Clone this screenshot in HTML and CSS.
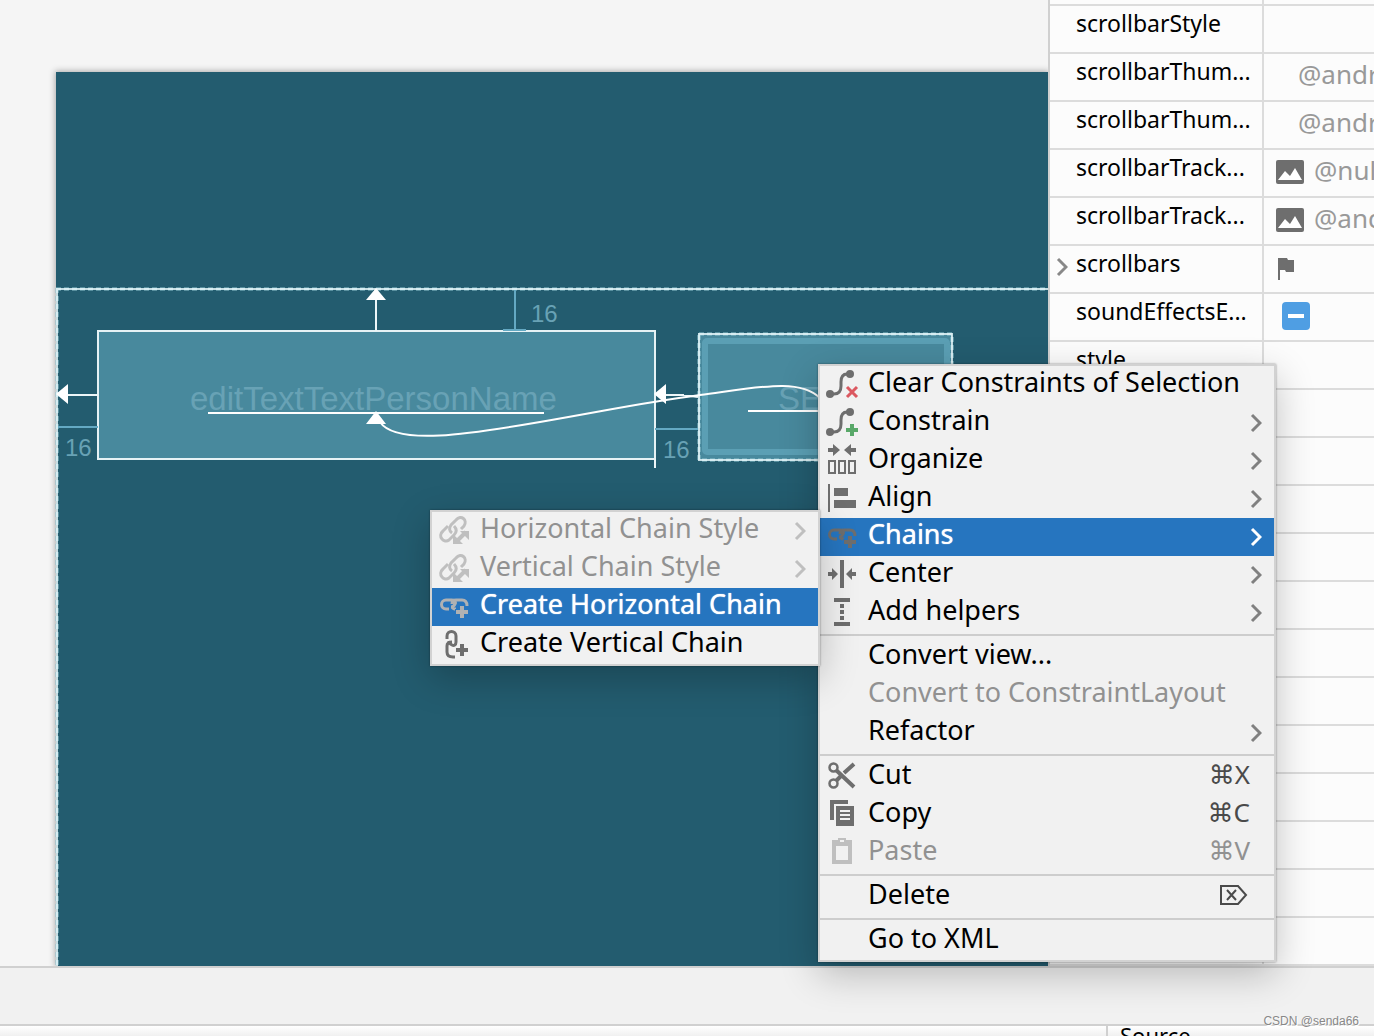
FILE: index.html
```html
<!DOCTYPE html>
<html lang="en">
<head>
<meta charset="utf-8">
<title>Layout Editor</title>
<link rel="stylesheet" href="styles.css">
</head>
<body>
<svg class="defs" aria-hidden="true">
  <defs>
    <symbol id="chevron" viewBox="0 0 12 20"><path d="M2 2l8 8-8 8" fill="none" stroke="currentColor" stroke-width="3"/></symbol>
    <symbol id="constraint" viewBox="0 0 28 28"><path d="M2 24h4c5 0 7-3 7-8v-4c0-5 2-8 6-8h3" fill="none" stroke="currentColor" stroke-width="3"/><circle cx="2" cy="24" r="4" fill="currentColor"/><circle cx="22" cy="4" r="4" fill="currentColor"/></symbol>
    <symbol id="chain" viewBox="0 0 28 28"><path d="M9 17H6a4.500 4.500 0 0 1 0-9h6c3 0 4 2 3 4s-2 3-4 3M12 12c0-3 2-4 4-4h6c3 0 5 2 5 6M12 15c1 2 2 2 4 2" fill="none" stroke="currentColor" stroke-width="3"/></symbol>
    <symbol id="chain-style" viewBox="0 0 28 28"><g fill="none" stroke="currentColor" stroke-width="3"><path d="M12 17c-3-2-3-5-1-8l5-5c5-6 12 0 8 6l-3 3"/><path d="M8 10l-5 5c-6 5 1 13 6 9l5-5c3-3 3-6 0-9"/><path d="M17 25l9-9" stroke-width="4"/></g><path d="M20 15h9v9zM13 18v10h10z" fill="currentColor"/></symbol>
    <symbol id="image" viewBox="0 0 28 24"><rect width="28" height="24" rx="2" fill="currentColor"/><path d="M2 20l7-9 5 5 5-8 7 12z" fill="#fff"/></symbol>
  </defs>
</svg>

<main class="workspace">
  <section class="canvas" aria-label="Blueprint">
    <div class="blueprint"></div>
    <svg class="drawing" width="1048" height="966">
      <g class="dashed">
        <path d="M56 289H1048M57 288V966"/>
      </g>
      <path class="core" d="M56 289H1048M57 288V966"/>
      <rect class="widget" x="98" y="331" width="557" height="128"/>
      <path class="edge" d="M655 459v9"/>
      <rect class="widget-fill" x="698" y="333" width="254" height="127"/>
      <rect class="dash-box" x="699" y="334" width="253" height="126"/>
      <rect class="core" x="699" y="334" width="253" height="126"/>
      <rect class="halo" x="705" y="341" width="242" height="111" rx="2"/>
      <text class="label" x="190" y="410">editTextTextPersonName</text>
      <text class="label" x="778" y="410">SE</text>
      <path class="baseline" d="M208 413H544M748 411H830"/>
      <path class="margin" d="M515 290v40M503 330h23M58 427h40M655 429h43"/>
      <text class="distance" x="531" y="322">16</text>
      <text class="distance" x="65" y="456">16</text>
      <text class="distance" x="663" y="458">16</text>
      <path class="edge" d="M376 299v32M66 395h32M665 395h19M683 395l15 2"/>
      <path class="wire" d="M380 422C396 446 470 434 540 422S640 403 700 395S800 378 820 398"/>
      <path class="arrow" d="M376 288l10 12h-20zM376 411l10 13h-20zM56 394l12-10v20zM654 394l12-10v20z"/>
    </svg>
  </section>

  <aside class="properties" aria-label="Attributes">
    <table>
      <tbody>
        <tr class="cut-off"><th></th><td></td></tr>
        <tr><th scope="row">scrollbarStyle</th><td></td></tr>
        <tr><th scope="row">scrollbarThum...</th><td><span class="value swatch">@android</span></td></tr>
        <tr><th scope="row">scrollbarThum...</th><td><span class="value swatch">@android</span></td></tr>
        <tr><th scope="row">scrollbarTrack...</th><td><span class="value"><svg width="28" height="24"><use href="#image"/></svg>@null</span></td></tr>
        <tr><th scope="row">scrollbarTrack...</th><td><span class="value"><svg width="28" height="24"><use href="#image"/></svg>@android</span></td></tr>
        <tr><th scope="row"><svg class="expand" width="12" height="20"><use href="#chevron"/></svg>scrollbars</th><td><span class="value"><svg width="20" height="24" viewBox="0 0 20 24"><path d="M2 2h9l1 2h6v12h-8l-1-2H4v10H2z" fill="currentColor"/></svg></span></td></tr>
        <tr><th scope="row"><label for="sound">soundEffectsE...</label></th><td><span class="value"><input id="sound" type="checkbox"></span></td></tr>
        <tr><th scope="row">style</th><td></td></tr>
        <tr><th></th><td></td></tr><tr><th></th><td></td></tr><tr><th></th><td></td></tr>
        <tr><th></th><td></td></tr><tr><th></th><td></td></tr><tr><th></th><td></td></tr>
        <tr><th></th><td></td></tr><tr><th></th><td></td></tr><tr><th></th><td></td></tr>
        <tr><th></th><td></td></tr><tr><th></th><td></td></tr><tr><th></th><td></td></tr>
      </tbody>
    </table>
  </aside>
</main>

<footer class="status"></footer>
<section class="editor"><div class="editor-left"></div><div class="source">Source</div></section>
<div class="watermark">CSDN @senda66</div>

<nav class="menu context" aria-label="Context menu">
  <button><svg class="icon" viewBox="0 0 28 28"><use href="#constraint"/><path d="M19 17l10 10M29 17l-10 10" stroke="#db5860" stroke-width="3"/></svg><span class="text">Clear Constraints of Selection</span></button>
  <button><svg class="icon" viewBox="0 0 28 28"><use href="#constraint"/><path d="M24 16v12M18 22h12" stroke="#59a869" stroke-width="4"/></svg><span class="text">Constrain</span><svg class="more"><use href="#chevron"/></svg></button>
  <button><svg class="icon" viewBox="0 0 28 28"><path d="M0 2h5v-4l7 6-7 6V6H0zM28 2h-5v-4l-7 6 7 6V6h5z" fill="currentColor"/><path d="M1 15h6v12H1zM11 15h6v12h-6zM21 15h6v12h-6z" fill="none" stroke="currentColor" stroke-width="2"/></svg><span class="text">Organize</span><svg class="more"><use href="#chevron"/></svg></button>
  <button><svg class="icon" viewBox="0 0 28 28"><path d="M0 0h2v28H0zM6 4h14v8H6zM6 16h22v8H6z" fill="currentColor"/></svg><span class="text">Align</span><svg class="more"><use href="#chevron"/></svg></button>
  <button class="selected"><svg class="icon" viewBox="0 0 28 28"><use href="#chain"/><path class="plus" d="M22 13v14M15 20h14"/><path d="M22 14v12M16 20h12" stroke="currentColor" stroke-width="4"/></svg><span class="text">Chains</span><svg class="more"><use href="#chevron"/></svg></button>
  <button><svg class="icon" viewBox="0 0 28 28"><path d="M12 0h4v28h-4zM0 12h4V8l6 6-6 6v-4H0zM28 12h-4V8l-6 6 6 6v-4h4z" fill="currentColor"/></svg><span class="text">Center</span><svg class="more"><use href="#chevron"/></svg></button>
  <button><svg class="icon" viewBox="0 0 28 28"><path d="M6 0h16v4H6zM6 24h16v4H6zM12 6h4v4h-4zM12 12h4v4h-4zM12 18h4v4h-4z" fill="currentColor"/></svg><span class="text">Add helpers</span><svg class="more"><use href="#chevron"/></svg></button>
  <hr>
  <button><span class="icon"></span><span class="text">Convert view...</span></button>
  <button disabled><span class="icon"></span><span class="text">Convert to ConstraintLayout</span></button>
  <button><span class="icon"></span><span class="text">Refactor</span><svg class="more"><use href="#chevron"/></svg></button>
  <hr>
  <button><svg class="icon" viewBox="0 0 28 28"><g fill="none" stroke="currentColor"><circle cx="5.500" cy="5.500" r="4" stroke-width="2.500"/><circle cx="5.500" cy="21.500" r="4" stroke-width="2.500"/><path d="M8 8l18 17M8 19l6-6M16 11L26 2" stroke-width="4"/></g></svg><span class="text">Cut</span><kbd class="text">⌘X</kbd></button>
  <button><svg class="icon" viewBox="0 0 28 28"><path d="M2 0h18v4H6v16H2zM8 6h18v20H8z" fill="currentColor"/><path d="M12 11h10M12 15h10M12 19h10" stroke="#f1f1f1" stroke-width="2"/></svg><span class="text">Copy</span><kbd class="text">⌘C</kbd></button>
  <button disabled><svg class="icon" viewBox="0 0 28 28"><path d="M4 2h6V0h8v2h6v24H4zM8 8v14h12V8zM12 2v2h4V2z" fill="currentColor" fill-rule="evenodd"/></svg><span class="text">Paste</span><kbd class="text">⌘V</kbd></button>
  <hr>
  <button><span class="icon"></span><span class="text">Delete</span><kbd class="glyph"><svg width="28" height="20" viewBox="0 0 28 20" role="img" aria-label="Forward delete"><path d="M1 1h17l8 9-8 9H1zM7 5l9 10M16 5L7 15" fill="none" stroke="currentColor" stroke-width="2"/></svg></kbd></button>
  <hr>
  <button><span class="icon"></span><span class="text">Go to XML</span></button>
</nav>

<nav class="menu submenu" aria-label="Chains">
  <button disabled><svg class="icon" viewBox="0 0 28 28"><use href="#chain-style"/></svg><span class="text">Horizontal Chain Style</span><svg class="more"><use href="#chevron"/></svg></button>
  <button disabled><svg class="icon" viewBox="0 0 28 28"><use href="#chain-style"/></svg><span class="text">Vertical Chain Style</span><svg class="more"><use href="#chevron"/></svg></button>
  <button class="selected light"><svg class="icon" viewBox="0 0 28 28"><use href="#chain"/><path class="plus" d="M22 13v14M15 20h14"/><path d="M22 14v12M16 20h12" stroke="currentColor" stroke-width="4"/></svg><span class="text">Create Horizontal Chain</span></button>
  <button><svg class="icon" viewBox="0 0 28 28"><g fill="none" stroke="currentColor" stroke-width="3"><path d="M7 9V6c0-6 9-6 9 0v6c0 3-2 4-4 3s-3-2-3-4"/><path d="M12 12c-3 0-5 1-5 4v6c0 3 2 5 6 5h2"/></g><path d="M22 14v12M16 20h12" stroke="currentColor" stroke-width="4"/></svg><span class="text">Create Vertical Chain</span></button>
</nav>
</body>
</html>
```

FILE: styles.css
```css
* { box-sizing: border-box; }

body {
  margin: 0;
  height: 100vh;
  position: relative;
  display: flex;
  flex-direction: column;
  overflow: hidden;
  background: #f1f1f1;
  color: #000;
  font-family: "Noto Sans", "DejaVu Sans", sans-serif;
}

.defs { position: absolute; width: 0; height: 0; }
symbol { overflow: visible; }

/* Workspace */
.workspace { flex: 1; min-height: 0; display: flex; }

.canvas {
  flex: 1;
  min-width: 0;
  position: relative;
  display: flex;
  overflow: hidden;
  padding: 72px 0 0 56px;
  background: #f5f5f5;
}
.blueprint { flex: 1; background: #235c6f; box-shadow: 0 0 6px 1px #aaa; }
.drawing { position: absolute; left: 0; top: 0; fill: none; }

.dashed path, .dash-box { stroke: #8fc3d0; stroke-width: 3; stroke-dasharray: 5 3; }
.core { stroke: #e4f5f8; stroke-width: 2; stroke-opacity: .85; }
.widget { fill: #48899d; stroke: #e6f2f5; stroke-width: 2; }
.widget-fill { fill: #48899d; }
.halo { stroke: #5b9fb4; stroke-width: 6; }
.edge { stroke: #edf6f8; stroke-width: 2; }
.wire { stroke: #fff; stroke-width: 2; }
.baseline { stroke: #fff; stroke-width: 2; }
.margin { stroke: #64a9c3; stroke-width: 2; }
.arrow { fill: #fff; }
.label { fill: #68a2b5; font: 33px "Liberation Sans", sans-serif; }
.distance { fill: #68a2b5; font: 24px "Liberation Sans", sans-serif; }

/* Attribute table */
.properties {
  width: 326px;
  flex: none;
  overflow: hidden;
  border-left: 2px solid #d0d0d0;
  background: #fcfcfc;
}
table { width: 100%; table-layout: fixed; border-collapse: separate; border-spacing: 0; }
tr { height: 48px; }
tr.cut-off { height: 6px; }
th, td { padding: 0; border-bottom: 2px solid #dcdcdc; white-space: nowrap; overflow: hidden; }
th {
  width: 214px;
  position: relative;
  padding: 0 0 12px 26px;
  border-right: 2px solid #dcdcdc;
  text-align: left;
  font-size: 23px;
  line-height: 30px;
  font-weight: 400;
}
td { padding: 0 0 6px 12px; }
.cut-off th, .cut-off td { padding: 0; }
.expand { position: absolute; left: 6px; top: 11px; color: #888; }
.value { display: flex; align-items: center; gap: 10px; color: #999; font-size: 26px; line-height: 36px; }
.value svg { flex: none; margin-top: 4px; color: #6e6e6e; }
.swatch { padding-left: 22px; }
input[type="checkbox"] {
  appearance: none;
  width: 28px;
  height: 28px;
  margin: 4px 6px 0;
  border-radius: 4px;
  background: linear-gradient(#fff, #fff) center / 16px 4px no-repeat #4f9ee3;
}

/* Bottom panes */
.status { height: 58px; flex: none; border-top: 2px solid #d0d0d0; }
.editor {
  height: 12px;
  flex: none;
  display: flex;
  overflow: hidden;
  border-top: 2px solid #d0d0d0;
  background: linear-gradient(#fff, #f0f0f0);
}
.editor-left { flex: 1; }
.source {
  width: 268px;
  padding-left: 12px;
  border-left: 2px solid #d0d0d0;
  font-size: 22px;
  line-height: 18px;
}
.watermark {
  position: absolute;
  right: 15px;
  bottom: 7px;
  color: #888;
  font: 12px/16px "Liberation Sans", sans-serif;
  text-shadow: 1px 1px 0 #fff;
}

/* Menus */
.menu {
  position: absolute;
  border: 2px solid #d2d2d2;
  background: #f1f1f1;
  box-shadow: 0 0 2px rgba(0, 0, 0, .4), 0 12px 36px rgba(0, 0, 0, .24);
}
.context { left: 818px; top: 364px; width: 458px; }
.submenu { left: 430px; top: 510px; width: 390px; }

.menu button {
  width: 100%;
  height: 38px;
  display: flex;
  align-items: center;
  gap: 12px;
  padding: 0 12px 2px 8px;
  border: 0;
  background: none;
  color: #000;
  font-family: inherit;
  font-size: 27px;
  line-height: 32px;
  text-align: left;
  white-space: nowrap;
}
.menu hr { height: 2px; margin: 2px 0; border: 0; background: #cdcdcd; }
.icon { width: 28px; height: 28px; flex: none; overflow: visible; color: #6e6e6e; }
.text { padding-bottom: 4px; }
.more { width: 12px; height: 20px; margin: 2px 0 0 auto; color: #808080; }
kbd { margin-left: auto; padding-right: 12px; font: inherit; font-size: 26px; color: #4a4a4a; }
.glyph { display: flex; padding: 0 14px 2px 0; }
.plus { stroke: #f1f1f1; stroke-width: 6; }

.menu button:disabled { color: #919191; }
.menu button:disabled .icon { color: #bfbfbf; }
.menu button:disabled .more { color: #bfbfbf; }
.menu button:disabled kbd { color: #919191; }
.menu .selected { background: #2675bf; color: #fff; text-shadow: 0 0 1px #fff; }
.selected .more { color: #fff; }
.selected .plus { stroke: #2675bf; }
.light .icon { color: #afb1b3; }
```
